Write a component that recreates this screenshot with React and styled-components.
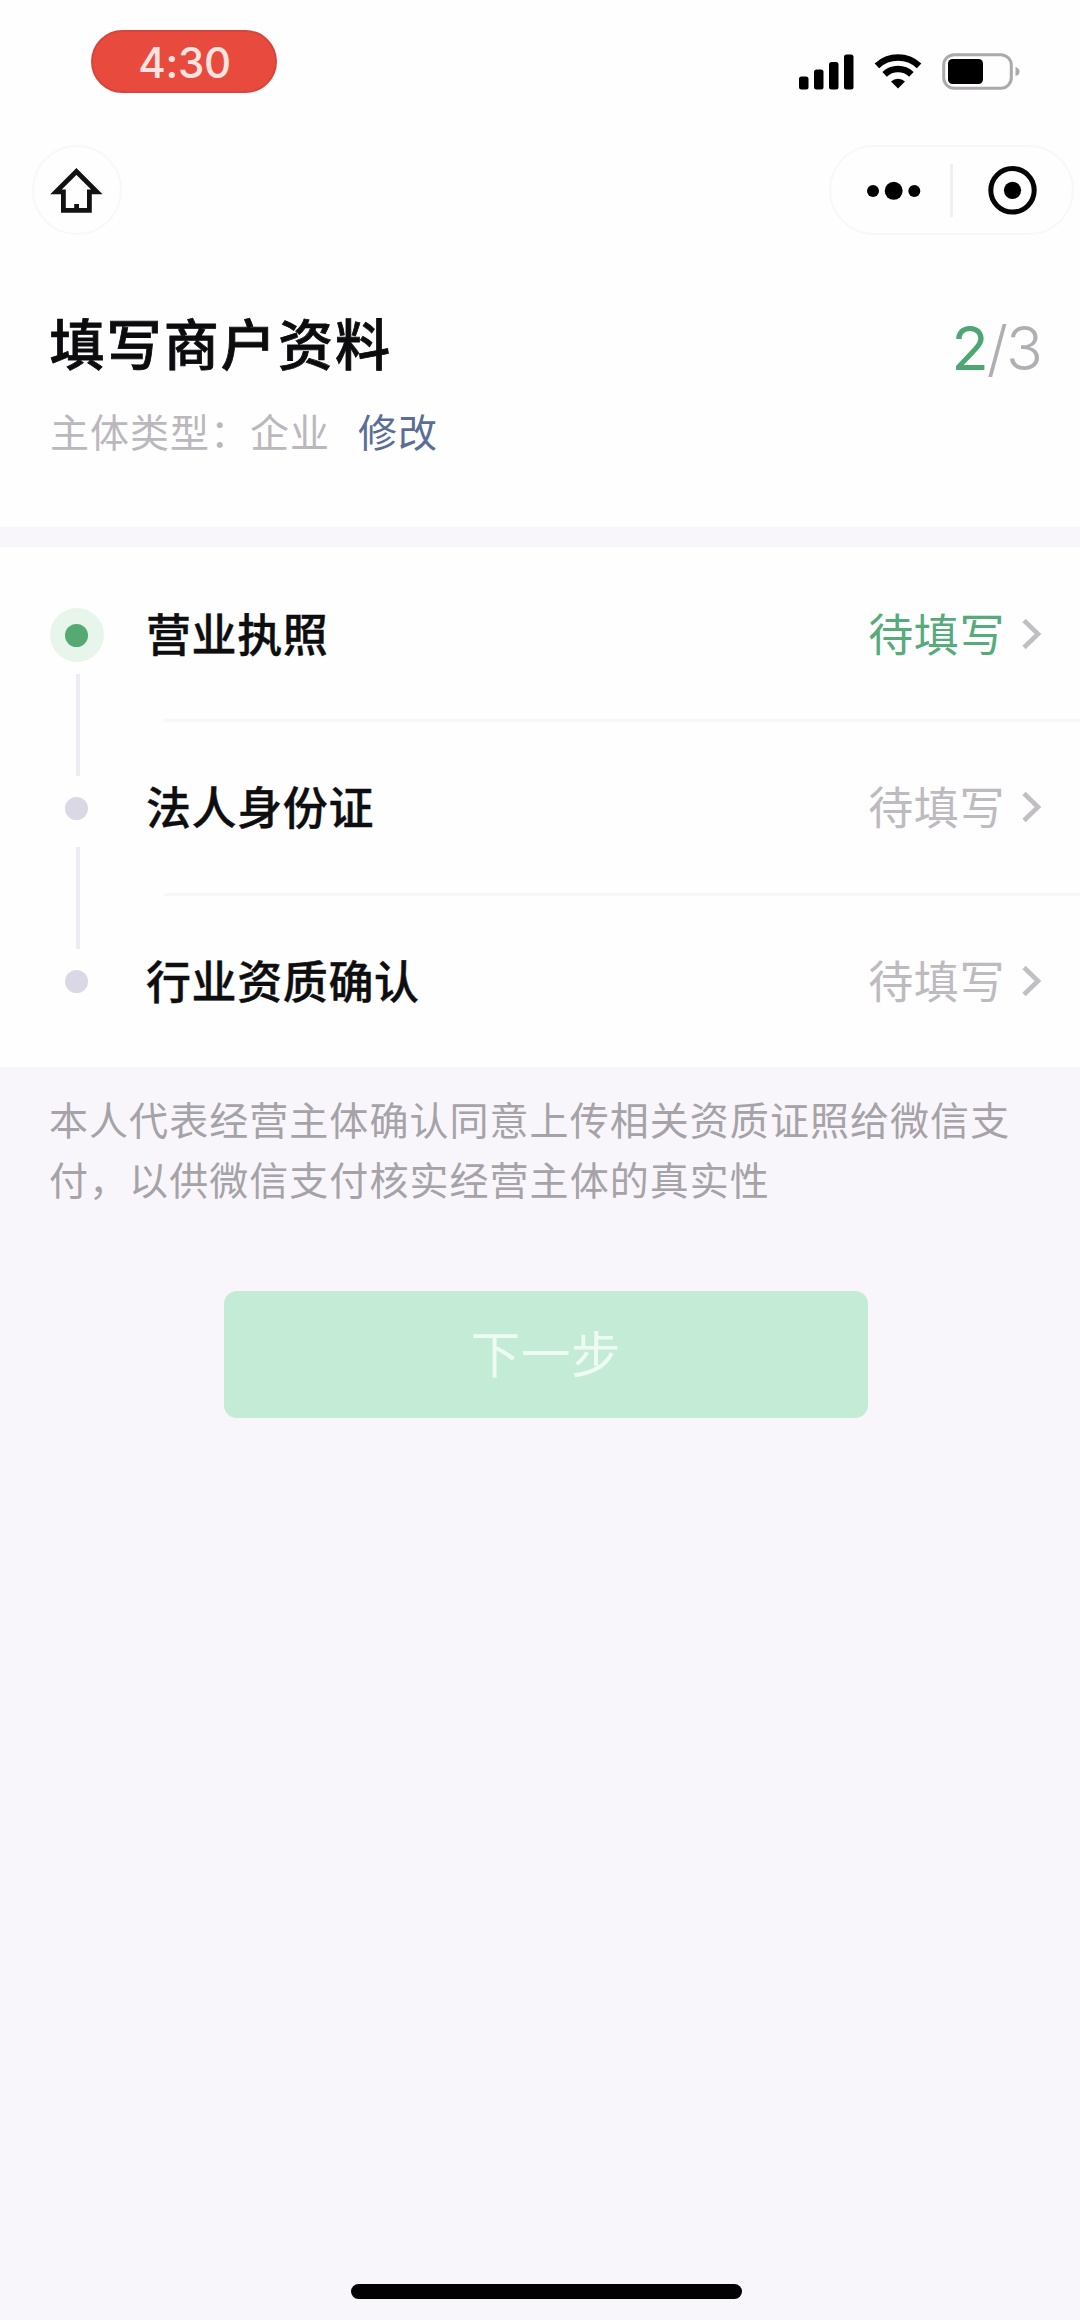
import React from "react";
import styled, { createGlobalStyle } from "styled-components";

const GlobalStyle = createGlobalStyle`
    * {
        box-sizing: border-box;
    }
    body {
        margin: 0;
        background: #f8f6fa;
        font-family: Inter, "Noto Sans CJK SC", sans-serif;
    }
`;

const Page = styled.div`
    width: 1080px;
    height: 2320px;
    display: flex;
    flex-direction: column;
    overflow: hidden;
    background: #f8f6fa;
`;

const Header = styled.header`
    height: 527px;
    background: #fefefe;
`;

const StatusBar = styled.div`
    height: 123px;
    padding: 30px 60px 0 91px;
    display: flex;
    justify-content: space-between;
    align-items: flex-start;
`;

const TimePill = styled.div`
    width: 186px;
    height: 63px;
    border-radius: 32px;
    border: 2px solid #d9453b;
    background: #e84b3e;
    color: #fde4e0;
    font-size: 42px;
    font-weight: 500;
    line-height: 61px;
    padding-left: 1px;
    text-align: center;
    letter-spacing: -0.3px;
`;

const StatusIcons = styled.div`
    display: flex;
    align-items: flex-start;
    padding-top: 23px;
`;

const SignalIcon = styled.svg`
    width: 56px;
    height: 37px;
    margin-right: 19px;
`;

const WifiIcon = styled.svg`
    width: 48px;
    height: 37px;
    margin-right: 20px;
`;

const BatteryIcon = styled.svg`
    width: 78px;
    height: 37px;
`;

const NavBar = styled.nav`
    height: 112px;
    padding: 22px 6px 0 32px;
    display: flex;
    justify-content: space-between;
`;

const HomeButton = styled.button`
    width: 90px;
    height: 90px;
    padding: 0;
    border: 2px solid #faf7fb;
    border-radius: 50%;
    background: none;

    svg {
        display: block;
        width: 86px;
        height: 86px;
    }
`;

const Capsule = styled.div`
    width: 245px;
    height: 90px;
    border: 2px solid #f9f7fa;
    border-radius: 45px;
    display: flex;
    align-items: center;
`;

const CapsuleIcon = styled.svg`
    width: 119px;
    height: 86px;
`;

const CapsuleDivider = styled.div`
    width: 3px;
    height: 53px;
    background: #f1eff3;
`;

const TitleRow = styled.div`
    height: 168px;
    padding: 70px 39px 0 49.5px;
    display: flex;
    justify-content: space-between;
`;

const Title = styled.h1`
    margin: 0;
    font-size: 55px;
    font-weight: 500;
    line-height: 80px;
    letter-spacing: 2.1px;
    color: #0c0c0f;
    -webkit-text-stroke: 0.8px #0c0c0f;
`;

const Progress = styled.div`
    font-size: 61px;
    font-weight: 300;
    line-height: 80px;
    padding-top: 3px;
    letter-spacing: -2px;
    color: #b0aeb2;

    span {
        color: #4da673;
        font-weight: 400;
    }
`;

const SubjectType = styled.div`
    display: flex;
    padding-left: 50px;
    font-size: 39px;
    line-height: 60px;
    letter-spacing: 1px;
    color: #bab8bc;
`;

const EditLink = styled.a`
    margin-left: 28px;
    color: #5b6d97;
`;

const StepList = styled.ul`
    list-style: none;
    margin: 20px 0 0;
    padding: 0;
    background: #fefefe;
`;

const StepItem = styled.li`
    height: 173.3px;
    padding-left: 49px;
    display: flex;
`;

const Track = styled.div`
    width: 55px;
    padding-top: 61px;
    display: flex;
    flex-direction: column;
    align-items: center;
`;

const Halo = styled.div`
    flex: none;
    width: 54px;
    height: 54px;
    border-radius: 50%;
    background: ${(props) => (props.$active ? "#e7f5eb" : "transparent")};
    display: flex;
    align-items: center;
    justify-content: center;
`;

const Dot = styled.div`
    width: 23px;
    height: 23px;
    border-radius: 50%;
    background: ${(props) => (props.$active ? "#55a972" : "#d9d8e4")};
`;

const TrackLine = styled.div`
    flex: none;
    width: 4px;
    height: 102px;
    margin: 12px 0 0 3px;
    background: #edecf2;
`;

const StepBody = styled.div`
    flex: 1;
    margin-left: 42px;
    display: flex;
    flex-direction: column;
`;

const StepContent = styled.div`
    flex: 1;
    padding: 2px 37px 0 0;
    display: flex;
    align-items: center;
`;

const Separator = styled.div`
    height: 3px;
    margin: 0 0 -2px 18px;
    background: #f9f6fa;
`;

const StepName = styled.div`
    flex: 1;
    font-size: 45px;
    font-weight: 500;
    letter-spacing: 0.6px;
    padding-bottom: 4px;
    color: #0e0e11;
    -webkit-text-stroke: 0.4px #0e0e11;
`;

const StepStatus = styled.div`
    font-size: 45px;
    letter-spacing: 0.6px;
    padding-bottom: 4px;
    color: ${(props) => (props.$active ? "#56ab7b" : "#bdbbbf")};
`;

const Chevron = styled.svg`
    width: 22px;
    height: 32px;
    margin-left: 16px;
`;

const Notice = styled.p`
    margin: 24px 49px 0;
    font-size: 39px;
    line-height: 60.5px;
    letter-spacing: 1.05px;
    color: #a5a3a7;
`;

const NextButton = styled.button`
    width: 644px;
    height: 127px;
    margin: 79px 0 0 224px;
    padding: 0;
    border: none;
    border-radius: 13px;
    background: #c4ebd5;
    color: #eefbf2;
    font-family: inherit;
    font-size: 49.5px;
    letter-spacing: 0.6px;
    line-height: 129px;
`;

const HomeIndicator = styled.div`
    width: 391px;
    height: 15px;
    margin: auto 0 21px 351px;
    border-radius: 8px;
    background: #020103;
`;

const steps = [
    { name: "营业执照", status: "待填写", active: true },
    { name: "法人身份证", status: "待填写", active: false },
    { name: "行业资质确认", status: "待填写", active: false },
];

const Signal = () => (
    <SignalIcon viewBox="0 0 56 37">
        <rect x="0" y="23.5" width="9.5" height="13" rx="2.5" />
        <rect x="15" y="16.5" width="9.5" height="20" rx="2.5" />
        <rect x="30" y="9" width="9.5" height="27.5" rx="2.5" />
        <rect x="45" y="1.5" width="9.5" height="35" rx="2.5" />
    </SignalIcon>
);

const Wifi = () => (
    <WifiIcon viewBox="0 0 48 37">
        <g fill="none" stroke="#000" strokeWidth="6.6">
            <path d="M2.9 12.8 A31 31 0 0 1 45.1 12.8" />
            <path d="M10.6 21.4 A19.5 19.5 0 0 1 37.4 21.4" />
        </g>
        <path d="M24 35.6 L17 28.4 A10.5 10.5 0 0 1 31 28.4 Z" />
    </WifiIcon>
);

const Battery = () => (
    <BatteryIcon viewBox="0 0 78 37">
        <rect
            x="1.7"
            y="1.7"
            width="67.6"
            height="33.6"
            rx="10.5"
            fill="none"
            stroke="#aca8ad"
            strokeWidth="3"
        />
        <rect x="6" y="6" width="35" height="25" rx="4.5" />
        <path d="M73.5 14 Q77.5 15 77.5 18.5 T73.5 23 Z" fill="#aca8ad" />
    </BatteryIcon>
);

const App = () => {
    return (
        <Page>
            <GlobalStyle />
            <Header>
                <StatusBar>
                    <TimePill>4:30</TimePill>
                    <StatusIcons>
                        <Signal />
                        <Wifi />
                        <Battery />
                    </StatusIcons>
                </StatusBar>
                <NavBar>
                    <HomeButton aria-label="首页">
                        <svg viewBox="0 0 86 86" fill="none" stroke="#121215" strokeWidth="4.8">
                            <path d="M42.4 24.5 L22 44.9 H29.4 V63.4 H55.4 V44.9 H62.8 Z" />
                            <path d="M42.6 57 V63" />
                        </svg>
                    </HomeButton>
                    <Capsule>
                        <CapsuleIcon viewBox="0 0 119 86">
                            <circle cx="42" cy="44" r="6" />
                            <circle cx="62.7" cy="43.8" r="9" />
                            <circle cx="83.3" cy="44" r="6" />
                        </CapsuleIcon>
                        <CapsuleDivider />
                        <CapsuleIcon viewBox="0 0 119 86">
                            <circle
                                cx="59.5"
                                cy="43.3"
                                r="21.7"
                                fill="none"
                                stroke="#050506"
                                strokeWidth="5"
                            />
                            <circle cx="59.5" cy="43.3" r="8.6" />
                        </CapsuleIcon>
                    </Capsule>
                </NavBar>
                <TitleRow>
                    <Title>填写商户资料</Title>
                    <Progress>
                        <span>2</span>/3
                    </Progress>
                </TitleRow>
                <SubjectType>
                    主体类型：企业
                    <EditLink>修改</EditLink>
                </SubjectType>
            </Header>
            <StepList>
                {steps.map((step, index) => (
                    <StepItem key={step.name}>
                        <Track>
                            <Halo $active={step.active}>
                                <Dot $active={step.active} />
                            </Halo>
                            {index < steps.length - 1 && <TrackLine />}
                        </Track>
                        <StepBody>
                            <StepContent>
                                <StepName>{step.name}</StepName>
                                <StepStatus $active={step.active}>{step.status}</StepStatus>
                                <Chevron viewBox="0 0 22 32">
                                    <path
                                        d="M3 2.5 L17 16 L3 29.5"
                                        fill="none"
                                        stroke="#c1bfc3"
                                        strokeWidth="4.6"
                                    />
                                </Chevron>
                            </StepContent>
                            {index < steps.length - 1 && <Separator />}
                        </StepBody>
                    </StepItem>
                ))}
            </StepList>
            <Notice>
                本人代表经营主体确认同意上传相关资质证照给微信支付，以供微信支付核实经营主体的真实性
            </Notice>
            <NextButton>下一步</NextButton>
            <HomeIndicator />
        </Page>
    );
};

export default App;
